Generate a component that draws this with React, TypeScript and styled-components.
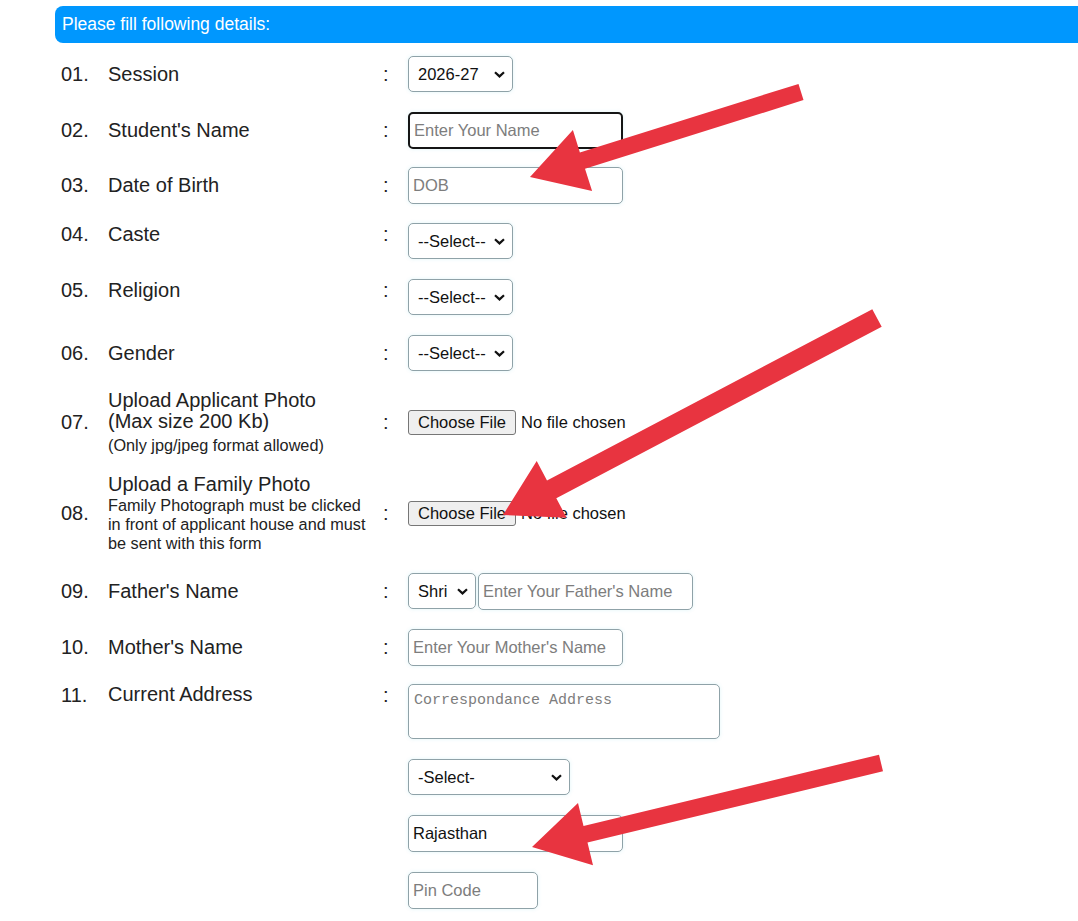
import React from 'react'
import styled, { createGlobalStyle } from 'styled-components'

const GlobalStyle = createGlobalStyle`
	html, body {
		margin: 0;
		padding: 0;
		background: #fff;
	}
	body {
		font-family: "Liberation Sans", Arial, sans-serif;
		color: #222;
	}
`

const Page = styled.div`
	position: relative;
	width: 1078px;
	height: 921px;
	overflow: hidden;
	padding-top: 6px;
	box-sizing: border-box;
`

const Banner = styled.div`
	margin-left: 55px;
	margin-right: -30px;
	height: 37px;
	padding-left: 7px;
	display: flex;
	align-items: center;
	background: #0097fe;
	border-radius: 8px;
	color: #fff;
	font-size: 17.5px;
`

const Rows = styled.div`
	display: flex;
	flex-direction: column;
	padding: 3px 0 0 61px;
`

const Num = styled.div`
	line-height: 23px;
`

const Label = styled.div`
	line-height: 21px;
`

const Note = styled.span<{ $gap?: number; $w?: number }>`
	display: block;
	margin-top: ${(p) => p.$gap ?? 0}px;
	max-width: ${(p) => (p.$w ? `${p.$w}px` : 'none')};
	font-size: 16.25px;
	line-height: 19px;
`

const Colon = styled.div`
	line-height: 23px;
`

const Control = styled.div<{ $stack?: boolean }>`
	display: flex;
	flex-direction: ${(p) => (p.$stack ? 'column' : 'row')};
	align-items: ${(p) => (p.$stack ? 'flex-start' : 'center')};
	gap: ${(p) => (p.$stack ? 20 : 2)}px;
	font-size: 16.5px;
`

// $raise lifts the number/label/colon above the control's centre line
const Row = styled.div<{ $h?: number; $top?: boolean; $raise?: number }>`
	display: grid;
	grid-template-columns: 47px 275px 25px 1fr;
	align-items: ${(p) => (p.$top ? 'start' : 'center')};
	min-height: ${(p) => p.$h ?? 56}px;
	padding-top: ${(p) => (p.$top ? 9 : 0)}px;
	box-sizing: border-box;
	font-size: 20px;

	${Num}, ${Label}, ${Colon} {
		margin-bottom: ${(p) => (p.$raise ?? 0) * 2}px;
	}
`

const controlBorder = '#8fa2a8'

const SelectWrap = styled.span`
	position: relative;
	display: inline-flex;
`

const Select = styled.select<{ $w: number }>`
	appearance: none;
	width: ${(p) => p.$w}px;
	height: 36px;
	padding: 0 0 0 9px;
	border: 1px solid ${controlBorder};
	border-radius: 5px;
	background: #fff;
	box-shadow: 0 0 4px rgba(0, 170, 200, 0.12);
	font: 16.5px "Liberation Sans", Arial, sans-serif;
	color: #111;
`

const Chevron = styled.svg`
	position: absolute;
	right: 8px;
	top: 50%;
	width: 11px;
	height: 7px;
	margin-top: -3px;
	pointer-events: none;
`

const Field = styled.input<{ $w: number }>`
	width: ${(p) => p.$w}px;
	height: 37px;
	padding: 0 4px;
	box-sizing: border-box;
	border: 1px solid ${controlBorder};
	border-radius: 5px;
	box-shadow: 0 0 4px rgba(0, 170, 200, 0.12);
	font: 16.5px "Liberation Sans", Arial, sans-serif;
	color: #111;

	&::placeholder {
		color: #7d7d7d;
	}
	&:focus {
		outline: none;
		border: 2px solid #151515;
		padding: 0 4px;
		caret-color: #111;
	}
`

const Area = styled.textarea`
	width: 312px;
	height: 55px;
	padding: 7px 5px 5px;
	box-sizing: border-box;
	border: 1px solid ${controlBorder};
	border-radius: 5px;
	box-shadow: 0 0 4px rgba(0, 170, 200, 0.12);
	resize: none;
	font: 15px "Liberation Mono", "Courier New", monospace;

	&::placeholder {
		color: #7d7d7d;
	}
`

const FileButton = styled.button`
	height: 25px;
	padding: 0 9px;
	border: 1px solid #767676;
	border-radius: 3px;
	background: #efefef;
	font: 16.5px "Liberation Sans", Arial, sans-serif;
	color: #111;
`

const FileNote = styled.span`
	margin-left: 3px;
	color: #111;
`

const Overlay = styled.svg`
	position: absolute;
	left: 0;
	top: 0;
	pointer-events: none;
`

type Pt = [number, number]

function arrowPoints(tail: Pt, tip: Pt, shaft: number, headLen: number, headW: number) {
	const dx = tip[0] - tail[0]
	const dy = tip[1] - tail[1]
	const len = Math.hypot(dx, dy)
	const ux = dx / len
	const uy = dy / len
	const px = -uy
	const py = ux
	const bx = tip[0] - ux * headLen
	const by = tip[1] - uy * headLen
	const s = shaft / 2
	const h = headW / 2
	const pts: Pt[] = [
		[tail[0] + px * s, tail[1] + py * s],
		[bx + px * s, by + py * s],
		[bx + px * h, by + py * h],
		tip,
		[bx - px * h, by - py * h],
		[bx - px * s, by - py * s],
		[tail[0] - px * s, tail[1] - py * s],
	]
	return pts.map((p) => `${p[0].toFixed(1)},${p[1].toFixed(1)}`).join(' ')
}

const arrows: { tail: Pt; tip: Pt; shaft: number }[] = [
	{ tail: [801, 92], tip: [530, 177], shaft: 17 },
	{ tail: [877, 318], tip: [503, 515], shaft: 20 },
	{ tail: [881, 763], tip: [532, 847], shaft: 17 },
]

function Dropdown({ width, value }: { width: number; value: string }) {
	return (
		<SelectWrap>
			<Select $w={width} defaultValue={value}>
				<option>{value}</option>
			</Select>
			<Chevron viewBox="0 0 11 7">
				<polyline points="1,1.2 5.5,5.4 10,1.2" fill="none" stroke="#111" strokeWidth="2.2" />
			</Chevron>
		</SelectWrap>
	)
}

function FilePicker() {
	return (
		<>
			<FileButton type="button">Choose File</FileButton>
			<FileNote>No file chosen</FileNote>
		</>
	)
}

export default function App() {
	return (
		<Page>
			<GlobalStyle />
			<Banner>Please fill following details:</Banner>
			<Rows>
				<Row>
					<Num>01.</Num>
					<Label>Session</Label>
					<Colon>:</Colon>
					<Control>
						<Dropdown width={105} value="2026-27" />
					</Control>
				</Row>
				<Row>
					<Num>02.</Num>
					<Label>Student's Name</Label>
					<Colon>:</Colon>
					<Control>
						<Field $w={215} placeholder="Enter Your Name" autoFocus />
					</Control>
				</Row>
				<Row $h={55}>
					<Num>03.</Num>
					<Label>Date of Birth</Label>
					<Colon>:</Colon>
					<Control>
						<Field $w={215} placeholder="DOB" />
					</Control>
				</Row>
				<Row $raise={7}>
					<Num>04.</Num>
					<Label>Caste</Label>
					<Colon>:</Colon>
					<Control>
						<Dropdown width={105} value="--Select--" />
					</Control>
				</Row>
				<Row $raise={7}>
					<Num>05.</Num>
					<Label>Religion</Label>
					<Colon>:</Colon>
					<Control>
						<Dropdown width={105} value="--Select--" />
					</Control>
				</Row>
				<Row>
					<Num>06.</Num>
					<Label>Gender</Label>
					<Colon>:</Colon>
					<Control>
						<Dropdown width={105} value="--Select--" />
					</Control>
				</Row>
				<Row $h={83}>
					<Num>07.</Num>
					<Label>
						Upload Applicant Photo
						<br />
						(Max size 200 Kb)
						<Note $gap={4}>(Only jpg/jpeg format allowed)</Note>
					</Label>
					<Colon>:</Colon>
					<Control>
						<FilePicker />
					</Control>
				</Row>
				<Row $h={99}>
					<Num>08.</Num>
					<Label>
						Upload a Family Photo
						<Note $gap={1} $w={262}>
							Family Photograph must be clicked in front of applicant house and must be sent with
							this form
						</Note>
					</Label>
					<Colon>:</Colon>
					<Control>
						<FilePicker />
					</Control>
				</Row>
				<Row>
					<Num>09.</Num>
					<Label>Father's Name</Label>
					<Colon>:</Colon>
					<Control>
						<Dropdown width={68} value="Shri" />
						<Field $w={215} placeholder="Enter Your Father's Name" />
					</Control>
				</Row>
				<Row>
					<Num>10.</Num>
					<Label>Mother's Name</Label>
					<Colon>:</Colon>
					<Control>
						<Field $w={215} placeholder="Enter Your Mother's Name" />
					</Control>
				</Row>
				<Row $top>
					<Num>11.</Num>
					<Label>Current Address</Label>
					<Colon>:</Colon>
					<Control $stack>
						<Area placeholder="Correspondance Address" />
						<Dropdown width={162} value="-Select-" />
						<Field $w={215} defaultValue="Rajasthan" />
						<Field $w={130} placeholder="Pin Code" />
					</Control>
				</Row>
			</Rows>
			<Overlay width={1078} height={921} viewBox="0 0 1078 921">
				{arrows.map((a, i) => (
					<polygon key={i} points={arrowPoints(a.tail, a.tip, a.shaft, 55, 64)} fill="#e83440" />
				))}
			</Overlay>
		</Page>
	)
}
